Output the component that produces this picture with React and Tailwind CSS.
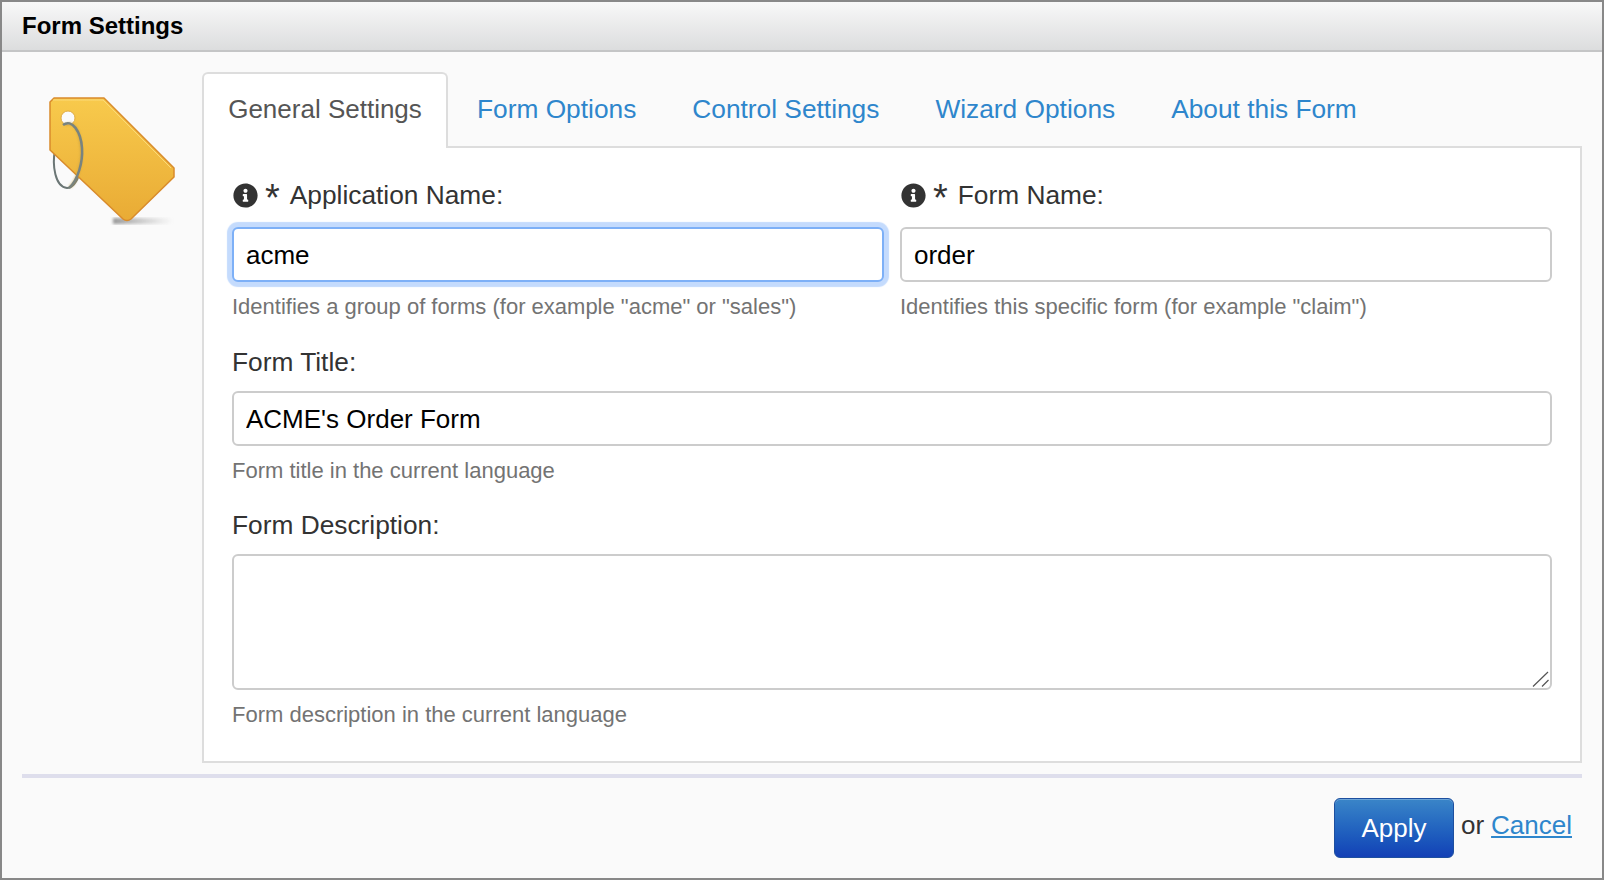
import React from "react";
import { FaInfoCircle } from "react-icons/fa";

const tabs = ["Form Options", "Control Settings", "Wizard Options", "About this Form"];

function TagIcon() {
  return (
    <svg width="140" height="140" viewBox="0 0 140 140">
      <defs>
        <linearGradient id="tagFill" x1="0" y1="0" x2="0" y2="1">
          <stop offset="0" stopColor="#f8ca4c" />
          <stop offset="1" stopColor="#e9ab35" />
        </linearGradient>
        <linearGradient id="tagShadow" x1="0" y1="0" x2="1" y2="0">
          <stop offset="0" stopColor="#777" stopOpacity="0.75" />
          <stop offset="1" stopColor="#999" stopOpacity="0" />
        </linearGradient>
        <filter id="tagBlur"><feGaussianBlur stdDeviation="1.5" /></filter>
        <filter id="ringBlur"><feGaussianBlur stdDeviation="1" /></filter>
      </defs>
      <rect x="73" y="128" width="60" height="6" fill="url(#tagShadow)" filter="url(#tagBlur)" />
      {/* back half of the ring, under the tag */}
      <path d="M15 60 C12 75 15 97 27 98 C33 98 37 92 40 82" fill="none" stroke="#6b7675" strokeWidth="2" />
      <path d="M14 8 L64 8 L134 78 L134 87 L91 129 Q87 132 83 129 L10 60 L10 12 Z" fill="url(#tagFill)" stroke="#d98b2b" strokeWidth="1.5" strokeLinejoin="round" />
      <path d="M13 10 L63 10 L131 78" fill="none" stroke="#fbd978" strokeWidth="1" />
      <circle cx="28" cy="28" r="7" fill="#fafafa" stroke="#e0ab44" strokeWidth="1" />
      <path d="M25 35 C34 30 39 40 41 56 C43 70 38 90 30 97" fill="none" stroke="#c9a040" strokeWidth="3" opacity="0.6" filter="url(#ringBlur)" />
      <path d="M23 35 C32 28 41 42 42 58 C43 72 38 90 29 98" fill="none" stroke="#78837f" strokeWidth="2.5" />
    </svg>
  );
}

function FieldLabel({ children, required }) {
  return (
    <div className="flex items-center h-[28px] text-[26.3px] text-[#333]">
      {required && (
        <>
          <FaInfoCircle className="w-[25px] h-[25px] ml-[1px] text-[#333] mr-[7px]" />
          <span className="mr-[10px] text-[38px] leading-none h-[32px]">*</span>
        </>
      )}
      <span className="pt-[2px]">{children}</span>
    </div>
  );
}

function Help({ children }) {
  return <p className="mt-[11px] text-[22px] leading-[28px] text-[#737373]">{children}</p>;
}

const inputCls = "block w-full h-[55px] px-[12px] pt-[2px] rounded-[6px] border-2 bg-white text-[26px] text-black outline-none";

export default function App() {
  return (
    <div className="w-[1604px] h-[880px] flex flex-col border-2 border-[#888] bg-[#fafafa] font-['Liberation_Sans',Arial,sans-serif]">
      <div className="h-[50px] shrink-0 flex items-center pl-[20px] border-b-2 border-[#c4c5c6] bg-gradient-to-b from-[#f8f8f8] to-[#dcddde]">
        <h1 className="text-[24px] font-bold text-black">Form Settings</h1>
      </div>

      <div className="flex-1 flex flex-col px-[20px]">
        <div className="flex">
          <div className="w-[180px] shrink-0 pt-[38px] pl-[18px]">
            <TagIcon />
          </div>
          <div className="flex-1 pt-[20px]">
            <div className="flex h-[76px]">
              <div className="relative z-10 h-[76px] w-[246px] flex items-center justify-center pb-[3px] rounded-t-[6px] border-2 border-b-0 border-[#ddd] bg-white text-[26px] text-[#555]">
                General Settings
              </div>
              <div className="flex-1 flex items-center gap-[56px] pl-[29px] pt-[1px] border-b-2 border-[#ddd] text-[26.3px] text-[#2e86cc]">
                {tabs.map((tab) => (
                  <a key={tab}>{tab}</a>
                ))}
              </div>
            </div>
            <div className="-mt-[2px] h-[617px] border-2 border-[#ddd] border-t-0 bg-white pl-[28px] pr-[28px] pt-[34px]">
              <div className="grid grid-cols-[652px_1fr] gap-x-[16px] pt-[1px]">
                <div>
                  <FieldLabel required>Application Name:</FieldLabel>
                  <input defaultValue="acme" className={`${inputCls} mt-[18px] border-[#7db0f7] shadow-[0_0_1px_5px_#c4dbfd]`} />
                  <Help>Identifies a group of forms (for example "acme" or "sales")</Help>
                </div>
                <div>
                  <FieldLabel required>Form Name:</FieldLabel>
                  <input defaultValue="order" className={`${inputCls} mt-[18px] border-[#ccc]`} />
                  <Help>Identifies this specific form (for example "claim")</Help>
                </div>
              </div>
              <div className="mt-[27px]">
                <FieldLabel>Form Title:</FieldLabel>
                <input defaultValue="ACME's Order Form" className={`${inputCls} mt-[15px] border-[#ccc]`} />
                <Help>Form title in the current language</Help>
              </div>
              <div className="mt-[26px]">
                <FieldLabel>Form Description:</FieldLabel>
                <div className="relative mt-[15px]">
                  <textarea className="block w-full h-[136px] resize-none rounded-[6px] border-2 border-[#ccc] bg-white outline-none" />
                  <svg className="absolute right-[2px] bottom-[2px]" width="18" height="18" viewBox="0 0 18 18">
                    <path d="M1 16.5 L16 2 M10 16.5 L16.5 10" stroke="#555" strokeWidth="1.2" fill="none" />
                  </svg>
                </div>
                <Help>Form description in the current language</Help>
              </div>
            </div>
          </div>
        </div>

        <div className="mt-[11px] h-[4px] bg-[#dedeec]" />

        <div className="flex justify-end items-center mt-[20px] pr-[10px] text-[26px] text-[#333]">
          <button className="w-[120px] h-[60px] rounded-[6px] border border-[#1d4f9f] bg-gradient-to-b from-[#3a85c8] to-[#1440b6] shadow-[inset_0_1px_0_#6ea5d8] text-white">
            Apply
          </button>
          <span className="ml-[7px] mr-[7px] mb-[5px]">or</span>
          <a className="mb-[5px] text-[#2e86cc] underline">Cancel</a>
        </div>
      </div>
    </div>
  );
}
